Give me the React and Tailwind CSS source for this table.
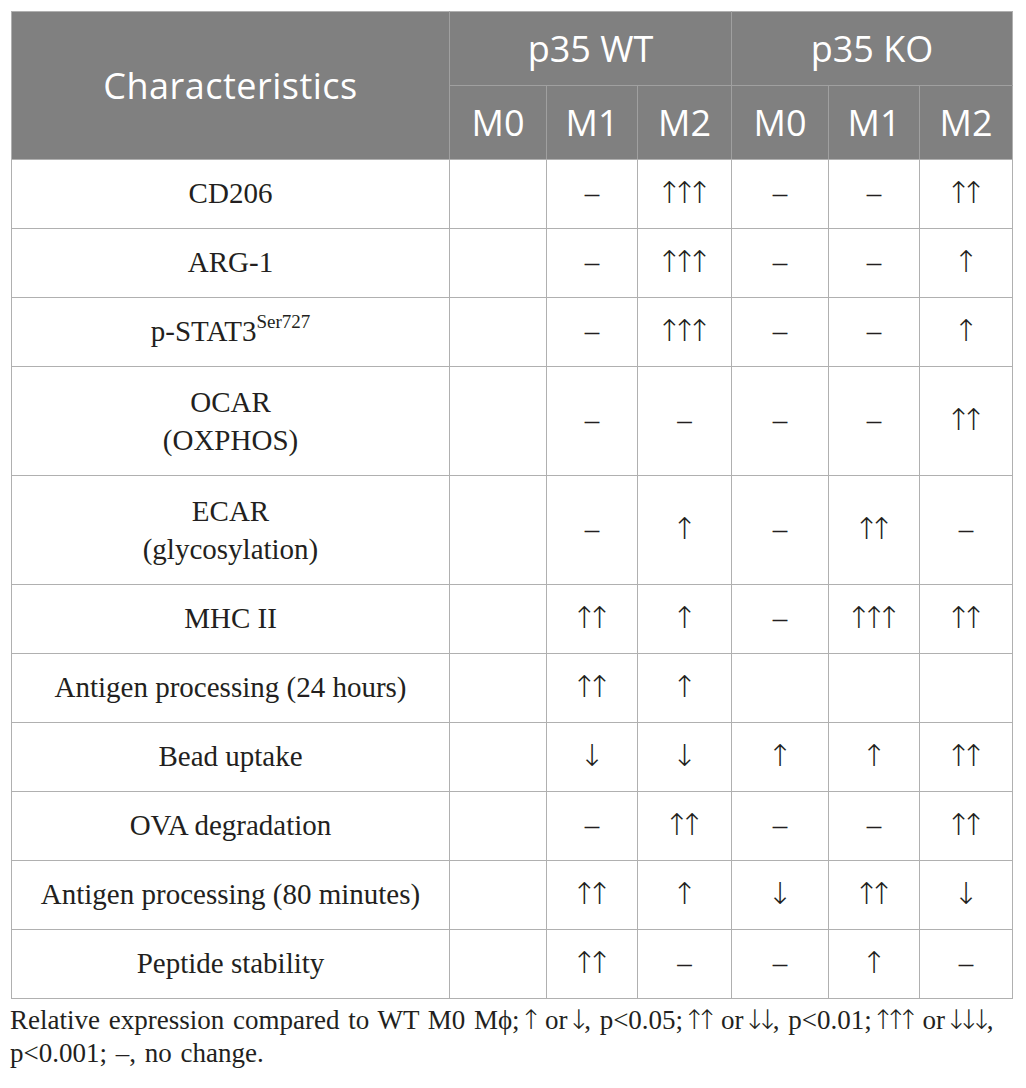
import React from "react";

const rows = [
  { label: "CD206", h: "h-[69px]", v: ["", "–", "↑↑↑", "–", "–", "↑↑"] },
  { label: "ARG-1", h: "h-[69px]", v: ["", "–", "↑↑↑", "–", "–", "↑"] },
  { label: "STAT", h: "h-[69px]", v: ["", "–", "↑↑↑", "–", "–", "↑"] },
  { label: ["OCAR", "(OXPHOS)"], h: "h-[109px]", v: ["", "–", "–", "–", "–", "↑↑"] },
  { label: ["ECAR", "(glycosylation)"], h: "h-[109px]", v: ["", "–", "↑", "–", "↑↑", "–"] },
  { label: "MHC II", h: "h-[69px]", v: ["", "↑↑", "↑", "–", "↑↑↑", "↑↑"] },
  { label: "Antigen processing (24 hours)", h: "h-[69px]", v: ["", "↑↑", "↑", "", "", ""] },
  { label: "Bead uptake", h: "h-[69px]", v: ["", "↓", "↓", "↑", "↑", "↑↑"] },
  { label: "OVA degradation", h: "h-[69px]", v: ["", "–", "↑↑", "–", "–", "↑↑"] },
  { label: "Antigen processing (80 minutes)", h: "h-[69px]", v: ["", "↑↑", "↑", "↓", "↑↑", "↓"] },
  { label: "Peptide stability", h: "h-[69px]", v: ["", "↑↑", "–", "–", "↑", "–"] },
];

function Arrows({ s, small }) {
  return (
    <span
      className={
        small
          ? "font-['DejaVu_Sans',sans-serif] font-extralight text-[27px] leading-none tracking-[-10px] pr-[4px]"
          : "font-['DejaVu_Sans',sans-serif] font-extralight text-[30px] leading-none tracking-[-10px] -ml-[5px] pr-[5px]"
      }
    >
      {s}
    </span>
  );
}

function CellValue({ c }) {
  if (c === "") return null;
  if (c === "–") return <span>–</span>;
  return <Arrows s={c} />;
}

function Label({ label }) {
  if (label === "STAT") {
    return (
      <span>
        p-STAT3<sup className="text-[19px] relative top-[-3px] align-super leading-none">Ser727</sup>
      </span>
    );
  }
  if (Array.isArray(label)) {
    return (
      <span className="block leading-[38px]">
        {label[0]}
        <br />
        {label[1]}
      </span>
    );
  }
  return <span>{label}</span>;
}

export default function App() {
  const serif = "font-['Liberation_Serif','Times_New_Roman',serif]";
  const sans = "font-['Open_Sans','Noto_Sans',sans-serif]";
  return (
    <div className="bg-white w-[1026px] h-[1088px] pt-[11px] pl-[11px]">
      <table className="table-fixed border-collapse w-[1001px]">
        <colgroup>
          <col className="w-[438px]" />
          <col className="w-[97px]" />
          <col className="w-[91px]" />
          <col className="w-[94px]" />
          <col className="w-[97px]" />
          <col className="w-[91px]" />
          <col className="w-[93px]" />
        </colgroup>
        <thead className={`${sans} text-white text-[36px] font-normal`}>
          <tr className="h-[74px]">
            <th
              rowSpan={2}
              className="bg-[#808080] font-normal tracking-[0.5px] border border-[#b0b0b0] border-r-[#a0a0a0]"
            >
              Characteristics
            </th>
            <th colSpan={3} className="bg-[#808080] font-normal border border-[#b0b0b0] border-r-[#a0a0a0] border-b-[#a0a0a0]">
              p35 WT
            </th>
            <th colSpan={3} className="bg-[#808080] font-normal border border-[#b0b0b0] border-b-[#a0a0a0]">
              p35 KO
            </th>
          </tr>
          <tr className="h-[74px]">
            {["M0", "M1", "M2", "M0", "M1", "M2"].map((m, i) => (
              <th
                key={i}
                className="bg-[#808080] font-normal border border-[#b0b0b0] border-r-[#a0a0a0] last:border-r-[#b0b0b0]"
              >
                {m}
              </th>
            ))}
          </tr>
        </thead>
        <tbody className={`${serif} text-[#231f20] text-[29px]`}>
          {rows.map((r, i) => (
            <tr key={i} className={r.h}>
              <td className="border border-[#b0b0b0] text-center align-middle">
                <Label label={r.label} />
              </td>
              {r.v.map((c, j) => (
                <td key={j} className="border border-[#b0b0b0] text-center align-middle">
                  <CellValue c={c} />
                </td>
              ))}
            </tr>
          ))}
        </tbody>
      </table>
      <p className={`${serif} text-[#231f20] text-[27px] leading-[33px] mt-[5px] -ml-[1px] [word-spacing:2px]`}>
        <span className="whitespace-nowrap">
          Relative expression compared to WT M0 Mϕ;<Arrows s="↑" small /> or<Arrows s="↓" small />, p&lt;0.05;
          <Arrows s="↑↑" small /> or<Arrows s="↓↓" small />, p&lt;0.01;<Arrows s="↑↑↑" small /> or
          <Arrows s="↓↓↓" small />,
        </span>
        <br />
        p&lt;0.001; –, no change.
      </p>
    </div>
  );
}
